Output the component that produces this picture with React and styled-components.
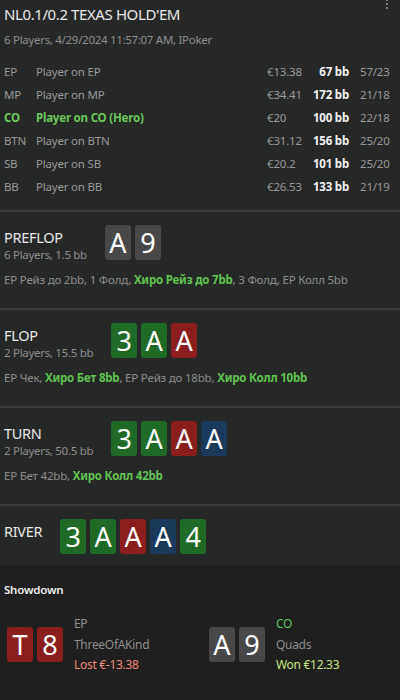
import styled, { createGlobalStyle } from "styled-components";

const GlobalStyle = createGlobalStyle`
  html, body {
    margin: 0;
    padding: 0;
    background: #262827;
  }
  body {
    font-family: "Noto Sans", "Open Sans", sans-serif;
    color: #e6e6e6;
  }
`;

const Page = styled.div`
  position: relative;
  width: 400px;
  min-height: 700px;
  background: #262827;
  overflow: hidden;
`;

const Kebab = styled.div`
  position: absolute;
  top: -1px;
  right: 12px;
  display: flex;
  flex-direction: column;
  gap: 2px;

  span {
    width: 2px;
    height: 2px;
    border-radius: 50%;
    background: #9a9a9a;
  }
`;

const Header = styled.div`
  padding: 4px 4px 12px;
`;

const Title = styled.div`
  font-size: 15px;
  line-height: 20px;
  letter-spacing: -0.4px;
  color: #e8e8e8;
`;

const Sub = styled.div`
  font-size: 11.5px;
  line-height: 16px;
  letter-spacing: -0.3px;
  color: #8e8e8e;
`;

const HeaderSub = styled(Sub)`
  margin-top: 8px;
`;

const Players = styled.div`
  margin-top: 12px;
  display: grid;
  grid-template-columns: 32px 1fr 40px 42px 11px 36px;
  grid-auto-rows: 23px;
  align-items: center;
  font-size: 11.5px;
  letter-spacing: -0.2px;
  color: #9a9a9a;
`;

const Cell = styled.div`
  white-space: nowrap;
  color: ${(p) => (p.hero ? "#6cc75c" : "inherit")};
  font-weight: ${(p) => (p.hero ? 700 : 400)};
`;

const Bb = styled.div`
  grid-column: 4;
  text-align: right;
  font-weight: 700;
  color: #f2f2f2;
  white-space: nowrap;
`;

const Ratio = styled.div`
  grid-column: 6;
  white-space: nowrap;
`;

const Street = styled.div`
  border-top: 2px solid #3a3c3b;
  padding: 13px 4px ${(p) => (p.last ? "12px" : "20px")};
`;

const StreetHead = styled.div`
  display: flex;
  align-items: flex-start;
  gap: 18px;
`;

const StreetTitle = styled.div`
  margin-top: 2px;
  font-size: 14.5px;
  line-height: 20px;
  letter-spacing: -0.3px;
  color: #e8e8e8;
`;

const Cards = styled.div`
  display: flex;
  gap: 4px;
`;

const cardColors = {
  gray: "#484848",
  green: "#1f6a26",
  red: "#8a1e1f",
  blue: "#1b395a",
};

const Card = styled.div`
  width: 26px;
  height: 35px;
  border-radius: 3px;
  background: ${(p) => cardColors[p.color]};
  color: #fff;
  font-size: 27px;
  line-height: 35px;
  text-align: center;
`;

const Actions = styled.div`
  margin-top: 9px;
  font-size: 11.5px;
  line-height: 16px;
  letter-spacing: -0.2px;
  color: #8e8e8e;
  white-space: nowrap;

  b {
    color: #62c253;
    font-weight: 700;
  }
`;

const Showdown = styled.div`
  background: #1e1f1e;
  padding: 16px 4px 30px;
  min-height: 134px;
  box-sizing: border-box;
`;

const ShowTitle = styled.div`
  font-size: 11.5px;
  line-height: 16px;
  font-weight: 600;
  letter-spacing: -0.2px;
  color: #ececec;
`;

const Hands = styled.div`
  margin-top: 16px;
  display: grid;
  grid-template-columns: 202px 1fr;
  padding-left: 3px;
`;

const Hand = styled.div`
  display: flex;
  align-items: center;
  gap: 11px;
`;

const HandInfo = styled.div`
  font-size: 12px;
  line-height: 20.5px;
  letter-spacing: -0.3px;
  color: #8e8e8e;
`;

const Pos = styled.div`
  color: ${(p) => (p.hero ? "#5cc45c" : "#8e8e8e")};
`;

const Result = styled.div`
  color: ${(p) => (p.won ? "#c6e585" : "#ee8a7c")};
`;

const players = [
  ["EP", "Player on EP", "€13.38", "67 bb", "57/23"],
  ["MP", "Player on MP", "€34.41", "172 bb", "21/18"],
  ["CO", "Player on CO (Hero)", "€20", "100 bb", "22/18", true],
  ["BTN", "Player on BTN", "€31.12", "156 bb", "25/20"],
  ["SB", "Player on SB", "€20.2", "101 bb", "25/20"],
  ["BB", "Player on BB", "€26.53", "133 bb", "21/19"],
];

const streets = [
  {
    name: "PREFLOP",
    sub: "6 Players, 1.5 bb",
    cards: [["A", "gray"], ["9", "gray"]],
    actions: [
      ["EP Рейз до 2bb, 1 Фолд, "],
      ["Хиро Рейз до 7bb", true],
      [", 3 Фолд, EP Колл 5bb"],
    ],
  },
  {
    name: "FLOP",
    sub: "2 Players, 15.5 bb",
    cards: [["3", "green"], ["A", "green"], ["A", "red"]],
    actions: [
      ["EP Чек, "],
      ["Хиро Бет 8bb", true],
      [", EP Рейз до 18bb, "],
      ["Хиро Колл 10bb", true],
    ],
  },
  {
    name: "TURN",
    sub: "2 Players, 50.5 bb",
    cards: [["3", "green"], ["A", "green"], ["A", "red"], ["A", "blue"]],
    actions: [["EP Бет 42bb, "], ["Хиро Колл 42bb", true]],
  },
  {
    name: "RIVER",
    cards: [["3", "green"], ["A", "green"], ["A", "red"], ["A", "blue"], ["4", "green"]],
  },
];

export default function App() {
  return (
    <>
      <GlobalStyle />
      <Page>
        <Kebab>
          <span />
          <span />
          <span />
        </Kebab>
        <Header>
          <Title>NL0.1/0.2 TEXAS HOLD'EM</Title>
          <HeaderSub>6 Players, 4/29/2024 11:57:07 AM, IPoker</HeaderSub>
          <Players>
            {players.map(([pos, name, stack, bb, ratio, hero]) => (
              <>
                <Cell key={pos + "p"} hero={hero}>{pos}</Cell>
                <Cell key={pos + "n"} hero={hero}>{name}</Cell>
                <Cell key={pos + "s"}>{stack}</Cell>
                <Bb key={pos + "b"}>{bb}</Bb>
                <Ratio key={pos + "r"}>{ratio}</Ratio>
              </>
            ))}
          </Players>
        </Header>

        {streets.map((s) => (
          <Street key={s.name} last={!s.actions}>
            <StreetHead>
              <div>
                <StreetTitle>{s.name}</StreetTitle>
                {s.sub && <Sub>{s.sub}</Sub>}
              </div>
              <Cards>
                {s.cards.map(([v, c], i) => (
                  <Card key={i} color={c}>{v}</Card>
                ))}
              </Cards>
            </StreetHead>
            {s.actions && (
              <Actions>
                {s.actions.map(([t, hero], i) =>
                  hero ? <b key={i}>{t}</b> : <span key={i}>{t}</span>
                )}
              </Actions>
            )}
          </Street>
        ))}

        <Showdown>
          <ShowTitle>Showdown</ShowTitle>
          <Hands>
            <Hand>
              <Cards>
                <Card color="red">T</Card>
                <Card color="red">8</Card>
              </Cards>
              <HandInfo>
                <Pos>EP</Pos>
                <div>ThreeOfAKind</div>
                <Result>Lost €-13.38</Result>
              </HandInfo>
            </Hand>
            <Hand>
              <Cards>
                <Card color="gray">A</Card>
                <Card color="gray">9</Card>
              </Cards>
              <HandInfo>
                <Pos hero>CO</Pos>
                <div>Quads</div>
                <Result won>Won €12.33</Result>
              </HandInfo>
            </Hand>
          </Hands>
        </Showdown>
      </Page>
    </>
  );
}
